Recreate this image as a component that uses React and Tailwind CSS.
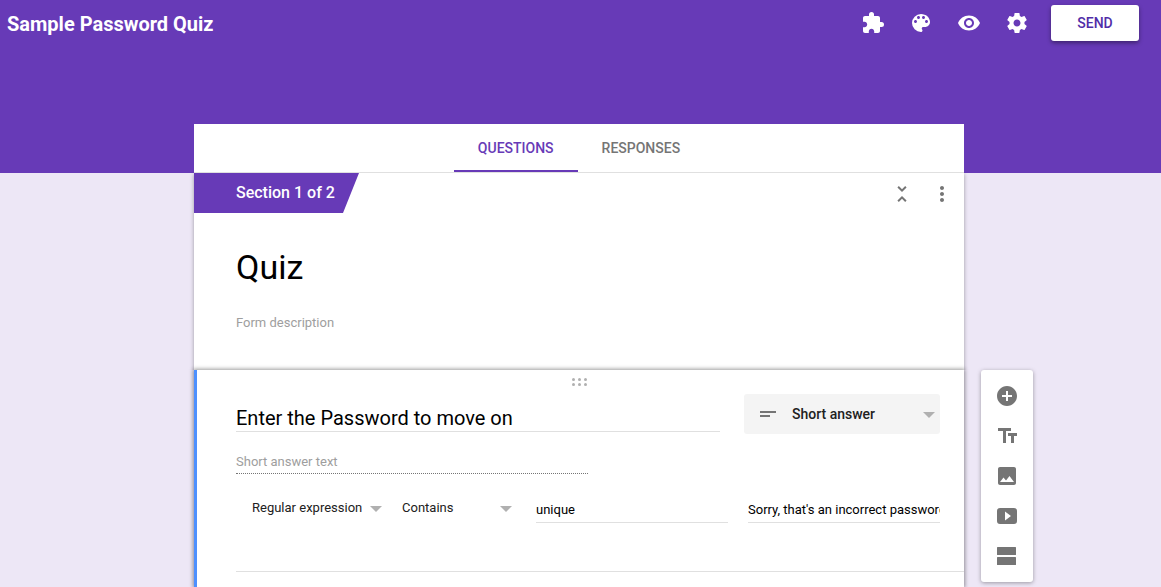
import React from "react";
import {
  MdAddCircle,
  MdExtension,
  MdImage,
  MdMoreVert,
  MdRemoveRedEye,
  MdUnfoldLess,
} from "react-icons/md";

function PaletteIcon() {
  return (
    <svg viewBox="0 0 24 24" className="size-6" fill="currentColor" aria-hidden="true">
      <path d="M12 3a9 9 0 0 0 0 18c.83 0 1.5-.67 1.5-1.5 0-.39-.15-.74-.39-1.01-.23-.26-.38-.61-.38-.99 0-.83.67-1.5 1.5-1.5H16c2.76 0 5-2.24 5-5 0-4.42-4.03-8-9-8zm-5.5 9c-.83 0-1.5-.67-1.5-1.5S5.67 9 6.5 9 8 9.67 8 10.5 7.33 12 6.5 12zm3-4C8.67 8 8 7.33 8 6.5S8.67 5 9.5 5s1.5.67 1.5 1.5S10.33 8 9.5 8zm5 0c-.83 0-1.5-.67-1.5-1.5S13.67 5 14.5 5s1.5.67 1.5 1.5S15.33 8 14.5 8zm3 4c-.83 0-1.5-.67-1.5-1.5S16.67 9 17.5 9s1.5.67 1.5 1.5-.67 1.5-1.5 1.5z" />
    </svg>
  );
}

function GearIcon() {
  return (
    <svg viewBox="0 0 24 24" className="size-6" fill="currentColor" aria-hidden="true">
      <path d="M19.43 12.98c.04-.32.07-.64.07-.98s-.03-.66-.07-.98l2.11-1.65c.19-.15.24-.42.12-.64l-2-3.46c-.12-.22-.39-.3-.61-.22l-2.49 1c-.52-.4-1.08-.73-1.69-.98l-.38-2.65C14.46 2.18 14.25 2 14 2h-4c-.25 0-.46.18-.49.42l-.38 2.65c-.61.25-1.17.59-1.69.98l-2.49-1c-.23-.09-.49 0-.61.22l-2 3.46c-.13.22-.07.49.12.64l2.11 1.65c-.04.32-.07.65-.07.98s.03.66.07.98l-2.11 1.65c-.19.15-.24.42-.12.64l2 3.46c.12.22.39.3.61.22l2.49-1c.52.4 1.08.73 1.69.98l.38 2.65c.03.24.24.42.49.42h4c.25 0 .46-.18.49-.42l.38-2.65c.61-.25 1.17-.59 1.69-.98l2.49 1c.23.09.49 0 .61-.22l2-3.46c.12-.22.07-.49-.12-.64l-2.11-1.65zM12 15.5c-1.93 0-3.5-1.57-3.5-3.5s1.57-3.5 3.5-3.5 3.5 1.57 3.5 3.5-1.57 3.5-3.5 3.5z" />
    </svg>
  );
}

function TextFieldsIcon() {
  return (
    <svg viewBox="0 0 24 24" className="size-6" fill="currentColor" aria-hidden="true">
      <path d="M3 4v3h5v12h3V7h5V4H3zm19 5h-9v3h3v7h3v-7h3V9z" />
    </svg>
  );
}

function VideoIcon() {
  return (
    <svg viewBox="0 0 24 24" className="size-6" fill="currentColor" aria-hidden="true">
      <path
        fillRule="evenodd"
        d="M5 4h14a3 3 0 0 1 3 3v10a3 3 0 0 1-3 3H5a3 3 0 0 1-3-3V7a3 3 0 0 1 3-3zm5 3.5v9l6-4.5z"
      />
    </svg>
  );
}

function SectionIcon() {
  return (
    <svg viewBox="0 0 24 24" className="size-6" fill="currentColor" aria-hidden="true">
      <rect x="2" y="3" width="19" height="8" rx="0.5" />
      <rect x="2" y="13" width="19" height="8" rx="0.5" />
    </svg>
  );
}

function ShortTextIcon() {
  return (
    <svg viewBox="0 0 16 6" className="h-[6px] w-4" fill="currentColor" aria-hidden="true">
      <path d="M0 0h16v2H0zM0 4h10v2H0z" />
    </svg>
  );
}

function Caret() {
  return (
    <svg viewBox="0 0 12 6" className="h-[6px] w-3" fill="#b0b0b0" aria-hidden="true">
      <path d="M0 0h12L6 6z" />
    </svg>
  );
}

function DragHandle() {
  return (
    <svg viewBox="0 0 15 8" className="h-2 w-[15px]" fill="#b0b0b0" aria-hidden="true">
      {[1.5, 7.5, 13.5].map((x) => (
        <React.Fragment key={x}>
          <circle cx={x} cy="1.5" r="1.5" />
          <circle cx={x} cy="6.5" r="1.5" />
        </React.Fragment>
      ))}
    </svg>
  );
}

const actions = [
  { label: "Add-ons", Icon: MdExtension },
  { label: "Color palette", Icon: PaletteIcon },
  { label: "Preview", Icon: MdRemoveRedEye },
  { label: "Settings", Icon: GearIcon },
];

const tools = [
  { label: "Add question", Icon: MdAddCircle },
  { label: "Add title and description", Icon: TextFieldsIcon },
  { label: "Add image", Icon: MdImage },
  { label: "Add video", Icon: VideoIcon },
  { label: "Add section", Icon: SectionIcon },
];

function RuleSelect({ label, value }) {
  return (
    <div className="relative flex items-center">
      <select
        aria-label={label}
        defaultValue={value}
        className="h-8 w-full appearance-none bg-transparent text-[13px] text-[#212121] outline-none"
      >
        <option>{value}</option>
      </select>
      <span className="pointer-events-none absolute right-0 pt-[2px]">
        <Caret />
      </span>
    </div>
  );
}

function RuleInput({ label, value }) {
  return (
    <input
      aria-label={label}
      defaultValue={value}
      className="mt-[3px] h-7 w-full min-w-0 border-b border-[#e0e0e0] bg-transparent pt-[2px] text-[13px] text-black outline-none"
    />
  );
}

export default function App() {
  return (
    <div className="flex min-h-screen flex-col bg-[linear-gradient(#673ab7_173px,#ede7f6_173px)] font-['Roboto',sans-serif] text-black">
      <header className="flex h-[46px] items-center justify-between pr-[22px] pl-[7px]">
        <h1 className="pt-[2px] text-xl font-bold text-white">Sample Password Quiz</h1>
        <div className="flex items-center">
          {actions.map(({ label, Icon }) => (
            <button
              key={label}
              aria-label={label}
              className="flex h-[46px] w-12 items-center justify-center text-2xl text-white"
            >
              <Icon />
            </button>
          ))}
          <button className="ml-[10px] h-9 w-[88px] rounded-[3px] bg-white text-sm font-medium text-[#512da8] shadow-[0_2px_4px_rgba(0,0,0,0.4)]">
            SEND
          </button>
        </div>
      </header>

      <div className="grid flex-1 grid-cols-[1fr_770px_1fr] pt-[78px] pr-[3px]">
        <main className="col-start-2 flex flex-col">
          <nav className="flex h-[49px] justify-center border-b border-[#e0e0e0] bg-white text-sm font-medium">
            <a
              href="#questions"
              className="flex items-center border-b-2 border-[#673ab7] px-6 pt-[2px] text-[#673ab7]"
            >
              QUESTIONS
            </a>
            <a href="#responses" className="flex items-center px-6 text-[#757575]">
              RESPONSES
            </a>
          </nav>

          <section className="h-[197px] bg-white shadow-[0_1px_4px_rgba(0,0,0,0.35)] [clip-path:inset(0_-6px)]">
            <div className="flex items-center justify-between pr-[10px]">
              <h2 className="flex h-10 w-[165px] items-center bg-[#673ab7] pl-[42px] text-base font-medium text-white [clip-path:polygon(0_0,100%_0,149px_100%,0_100%)]">
                Section 1 of 2
              </h2>
              <div className="flex gap-4 pt-[2px] text-2xl text-[#757575]">
                <button aria-label="Collapse section">
                  <MdUnfoldLess />
                </button>
                <button aria-label="More options">
                  <MdMoreVert />
                </button>
              </div>
            </div>
            <div className="flex flex-col px-[42px] pt-8">
              <input
                aria-label="Section title"
                defaultValue="Quiz"
                className="h-11 w-full text-[34px] leading-[44px] outline-none"
              />
              <input
                aria-label="Form description"
                placeholder="Form description"
                className="mt-[23px] h-5 w-full text-[13px] outline-none placeholder:text-[#9e9e9e]"
              />
            </div>
          </section>

          <section className="relative flex-1 border-l-[3px] border-[#4d90fe] bg-white pl-[39px] shadow-[0_0_4px_1px_rgba(0,0,0,0.4)]">
            <div className="flex justify-center pt-2 pr-[42px]">
              <DragHandle />
            </div>
            <div className="flex gap-6 pt-2 pr-6">
              <input
                aria-label="Question"
                defaultValue="Enter the Password to move on"
                className="mt-[10px] h-7 min-w-0 flex-1 border-b border-[#e0e0e0] text-xl outline-none"
              />
              <div className="relative flex w-[196px] items-center">
                <span className="pointer-events-none absolute left-4 text-[#757575]">
                  <ShortTextIcon />
                </span>
                <select
                  aria-label="Question type"
                  defaultValue="Short answer"
                  className="h-10 w-full appearance-none rounded-[3px] bg-[#f4f4f4] pl-12 text-sm font-medium text-[#212121] outline-none"
                >
                  <option>Short answer</option>
                </select>
                <span className="pointer-events-none absolute right-[5px] pt-[2px]">
                  <Caret />
                </span>
              </div>
            </div>
            <div className="pr-6">
              <p className="mt-4 h-6 w-1/2 border-b border-dotted border-[#757575] text-[13px] leading-6 text-[#9e9e9e]">
                Short answer text
              </p>
            </div>
            <div className="mt-[18px] grid grid-cols-[130px_114px_1fr_1fr] gap-5 pr-6 pl-4">
              <RuleSelect label="Validation type" value="Regular expression" />
              <div className="pr-1">
                <RuleSelect label="Validation rule" value="Contains" />
              </div>
              <div>
                <RuleInput label="Pattern" value="unique" />
              </div>
              <div>
                <RuleInput label="Error text" value="Sorry, that's an incorrect password" />
              </div>
            </div>
            <div className="mt-[47px] border-t border-[#e0e0e0]" />
          </section>
        </main>

        <aside className="mt-[246px] ml-[17px] flex w-[52px] flex-col self-start rounded-[3px] bg-white py-[6px] shadow-[0_1px_4px_rgba(0,0,0,0.35)]">
          {tools.map(({ label, Icon }) => (
            <button
              key={label}
              aria-label={label}
              className="flex h-10 items-center justify-center text-2xl text-[#757575]"
            >
              <Icon />
            </button>
          ))}
        </aside>
      </div>
    </div>
  );
}
